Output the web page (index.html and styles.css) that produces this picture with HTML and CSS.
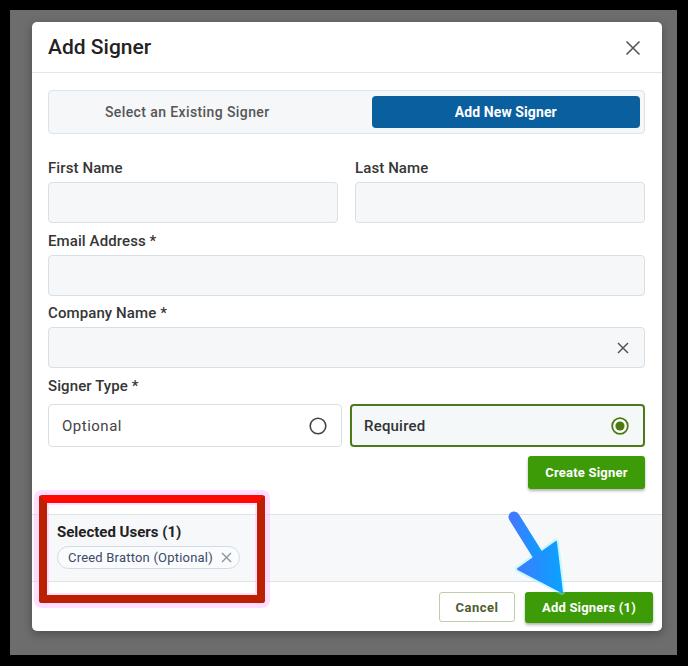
FILE: index.html
```html
<!DOCTYPE html>
<html>
<head>
<meta charset="utf-8">
<link rel="stylesheet" href="styles.css">
</head>
<body>
<div class="backdrop">
  <div class="modal">
    <div class="modal-header">
      <h1 class="title">Add Signer</h1>
      <svg class="close" width="16" height="16" viewBox="0 0 16 16"><path d="M1.5 1.5L14.5 14.5M14.5 1.5L1.5 14.5" stroke="#555" stroke-width="1.6" fill="none"/></svg>
    </div>
    <div class="modal-body">
      <div class="tabs">
        <div class="tab">Select an Existing Signer</div>
        <div class="tab active">Add New Signer</div>
      </div>
      <div class="row first-row">
        <div class="field">
          <label class="label">First Name</label>
          <div class="input"></div>
        </div>
        <div class="field">
          <label class="label">Last Name</label>
          <div class="input"></div>
        </div>
      </div>
      <div class="field spaced">
        <label class="label">Email Address *</label>
        <div class="input"></div>
      </div>
      <div class="field spaced tight">
        <label class="label">Company Name *</label>
        <div class="input with-clear">
          <svg width="12" height="12" viewBox="0 0 12 12"><path d="M1 1L11 11M11 1L1 11" stroke="#555" stroke-width="1.5" fill="none"/></svg>
        </div>
      </div>
      <div class="field spaced">
        <label class="label label-gap">Signer Type *</label>
        <div class="options">
          <div class="option">
            <span>Optional</span>
            <svg width="18" height="18" viewBox="0 0 18 18"><circle cx="9" cy="9" r="7.8" stroke="#444" stroke-width="1.6" fill="#fff"/></svg>
          </div>
          <div class="option selected">
            <span>Required</span>
            <svg width="18" height="18" viewBox="0 0 18 18"><circle cx="9" cy="9" r="7.8" stroke="#4a7a12" stroke-width="1.8" fill="#fff"/><circle cx="9" cy="9" r="4.6" fill="#4a7a12"/></svg>
          </div>
        </div>
      </div>
      <div class="create-wrap">
        <button class="btn-green create">Create Signer</button>
      </div>
    </div>
    <div class="selected-users">
      <div class="sel-title">Selected Users (1)</div>
      <div class="chip">
        <span>Creed Bratton (Optional)</span>
        <svg width="11" height="11" viewBox="0 0 11 11"><path d="M1 1L10 10M10 1L1 10" stroke="#8a93a0" stroke-width="1.4" fill="none"/></svg>
      </div>
    </div>
    <div class="modal-footer">
      <button class="btn-outline">Cancel</button>
      <button class="btn-green add">Add Signers (1)</button>
    </div>
  </div>
</div>
<div class="red-box"></div>
<svg class="arrow" width="688" height="666" viewBox="0 0 688 666">
  <defs>
    <linearGradient id="ag" x1="0" y1="0" x2="1" y2="0">
      <stop offset="0" stop-color="#3f7bff"/>
      <stop offset="0.6" stop-color="#1d93ff"/>
      <stop offset="1" stop-color="#0aa3ff"/>
    </linearGradient>
  </defs>
  <g opacity="0.4" fill="#7ff6ff" stroke="#7ff6ff" stroke-width="6" stroke-linejoin="round" stroke-linecap="round">
    <line x1="514" y1="517" x2="544" y2="565"/>
    <polygon points="518,569 556,542 562,592"/>
  </g>
  <line x1="514" y1="517" x2="544" y2="565" stroke="url(#ag)" stroke-width="11" stroke-linecap="round"/>
  <polygon points="518,569 556,542 562,592" fill="url(#ag)" stroke="url(#ag)" stroke-width="2" stroke-linejoin="round"/>
</svg>
</body>
</html>
```

FILE: styles.css
```css
* { box-sizing: border-box; }
html, body { margin: 0; padding: 0; }
body {
  width: 688px;
  height: 666px;
  overflow: hidden;
  background: #000;
  font-family: Roboto, "Liberation Sans", Arial, sans-serif;
  position: relative;
}
.backdrop {
  margin: 10px 0 0 10px;
  width: 667px;
  height: 645px;
  background: #6d6d6d;
  padding: 12px 0 0 22px;
}
.modal {
  width: 630px;
  height: 609px;
  background: #fff;
  border-radius: 5px;
  display: flex;
  flex-direction: column;
  overflow: hidden;
  box-shadow: 0 3px 10px rgba(0,0,0,0.3);
}
.modal-header {
  height: 51px;
  flex: none;
  border-bottom: 1px solid #e2e6ea;
  display: flex;
  align-items: center;
  justify-content: space-between;
  padding: 0 21px 0 16px;
}
.title {
  margin: 0;
  font-size: 21px;
  font-weight: 500;
  color: #222;
}
.close { display: block; margin-top: 2px; }
.modal-body {
  flex: none;
  padding: 17px 17px 25px 16px;
  display: flex;
  flex-direction: column;
}
.tabs {
  height: 44px;
  border: 1px solid #dbe2e8;
  background: #f5f7f9;
  border-radius: 4px;
  padding: 5px 4px;
  display: grid;
  grid-template-columns: 1fr 1fr;
  column-gap: 50px;
}
.tab {
  height: 32px;
  display: flex;
  align-items: center;
  justify-content: center;
  font-size: 14px;
  font-weight: 500;
  color: #555;
  letter-spacing: 0.4px;
}
.tab.active {
  background: #0a609f;
  color: #fff;
  font-weight: 700;
  letter-spacing: 0.1px;
  border-radius: 4px;
}
.row {
  display: grid;
  grid-template-columns: 1fr 1fr;
  column-gap: 17px;
}
.first-row { margin-top: 24px; }
.field { display: flex; flex-direction: column; }
.spaced { margin-top: 8px; }
.tight { margin-top: 7px; }
.label {
  font-size: 15px;
  line-height: 20px;
  font-weight: 500;
  color: #363636;
  margin-bottom: 4px;
  letter-spacing: 0.1px;
}
.label-gap { margin-bottom: 8px; }
.input {
  height: 41px;
  border: 1px solid #d8e0e6;
  background: #f5f7f9;
  border-radius: 4px;
}
.with-clear {
  display: flex;
  align-items: center;
  justify-content: flex-end;
  padding-right: 15px;
}
.options {
  display: grid;
  grid-template-columns: 294px 295px;
  column-gap: 8px;
}
.option {
  height: 43px;
  border: 1px solid #d8e0e6;
  border-radius: 4px;
  background: #fff;
  display: flex;
  align-items: center;
  justify-content: space-between;
  padding: 0 14px 0 13px;
  font-size: 15px;
  color: #444;
  letter-spacing: 0.5px;
}
.option.selected {
  border: 2px solid #4d7a18;
  background: #f5f8f9;
  color: #333;
  font-weight: 500;
  letter-spacing: 0.2px;
  padding: 0 14px 0 12px;
}
.create-wrap {
  display: flex;
  justify-content: flex-end;
  margin-top: 9px;
}
.btn-green {
  border: none;
  background: #3c9b06;
  color: #fff;
  font-family: inherit;
  font-size: 13px;
  font-weight: 700;
  border-radius: 3px;
  box-shadow: 0 2px 3px rgba(0,0,0,0.3);
  letter-spacing: 0.2px;
  padding: 0;
}
.create { width: 117px; height: 33px; }
.selected-users {
  height: 68px;
  flex: none;
  background: #f6f8fa;
  border-top: 1px solid #dde2e7;
  border-bottom: 1px solid #dde2e7;
  padding: 7px 25px 0;
}
.sel-title {
  font-size: 15px;
  line-height: 20px;
  font-weight: 700;
  color: #222;
}
.chip {
  margin-top: 4px;
  height: 23px;
  width: 183px;
  display: flex;
  align-items: center;
  justify-content: space-between;
  padding: 0 7px 0 10px;
  border: 1px solid #d2dbe3;
  border-radius: 12px;
  background: #f9fbfc;
  font-size: 13px;
  color: #3b4a69;
  letter-spacing: 0.2px;
}
.chip svg { display: block; }
.modal-footer {
  flex: 1;
  display: flex;
  justify-content: flex-end;
  align-items: flex-start;
  gap: 10px;
  padding: 10px 9px 0 0;
}
.btn-outline {
  width: 76px;
  height: 30px;
  border: 1px solid #bfcea8;
  background: #fff;
  border-radius: 3px;
  color: #4e5c30;
  font-family: inherit;
  font-size: 13px;
  font-weight: 700;
  letter-spacing: 0.5px;
  padding: 0;
}
.add { width: 128px; height: 31px; }
.red-box {
  position: absolute;
  left: 39px;
  top: 495px;
  width: 226px;
  height: 108px;
  border: 8px solid #bb2100;
  border-top-color: #ff0a00;
  border-radius: 3px;
  box-shadow: 0 0 0 5px rgba(255, 200, 255, 0.6), inset 0 0 0 2px rgba(255, 200, 255, 0.6);
}
.arrow {
  position: absolute;
  left: 0;
  top: 0;
  pointer-events: none;
}
```
